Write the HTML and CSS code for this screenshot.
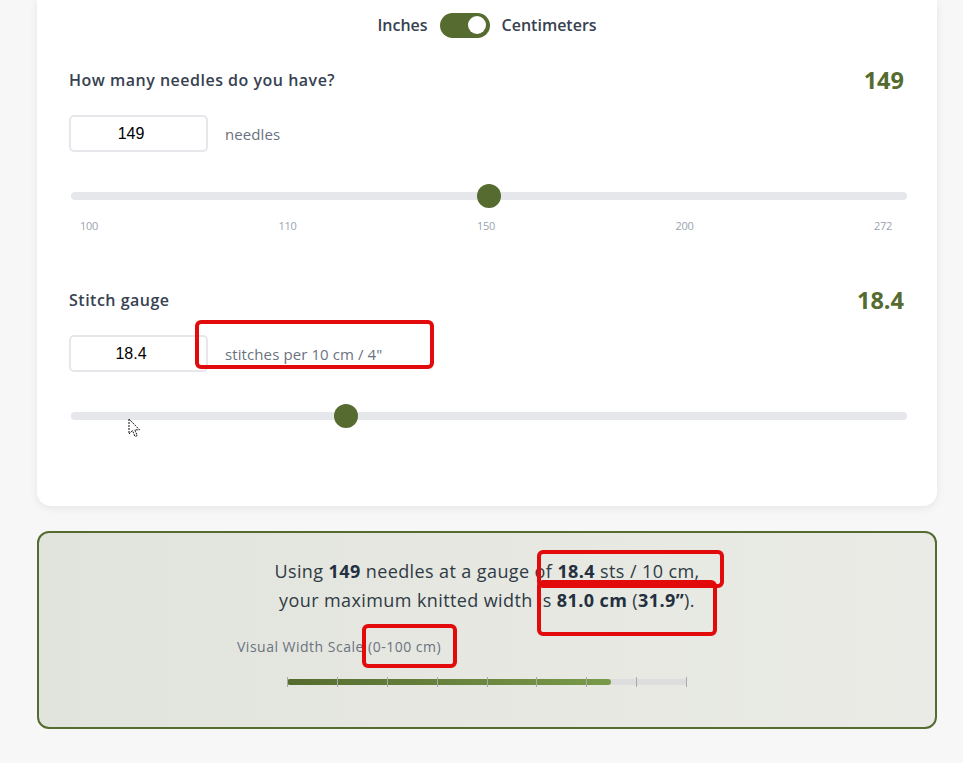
FILE: index.html
```html
<!DOCTYPE html>
<html lang="en">
<head>
<meta charset="utf-8">
<title>Knitting width calculator</title>
<link rel="stylesheet" href="styles.css">
</head>
<body>
<div class="page">
  <section class="card">
    <div class="units">
      <span class="unit">Inches</span>
      <span class="switch"><span class="knob"></span></span>
      <span class="unit">Centimeters</span>
    </div>

    <div class="field">
      <div class="field-head">
        <span class="label">How many needles do you have?</span>
        <span class="value">149</span>
      </div>
      <div class="input-row">
        <div class="num-input">149</div>
        <span class="suffix">needles</span>
      </div>
      <div class="slider">
        <div class="track"></div>
        <div class="thumb" style="left: 406px"></div>
      </div>
      <div class="ticks">
        <span>100</span><span>110</span><span>150</span><span>200</span><span>272</span>
      </div>
    </div>

    <div class="field field-gauge">
      <div class="field-head">
        <span class="label">Stitch gauge</span>
        <span class="value">18.4</span>
      </div>
      <div class="input-row">
        <div class="num-input">18.4</div>
        <span class="suffix">stitches per 10 cm / 4"</span>
      </div>
      <div class="slider">
        <div class="track"></div>
        <div class="thumb" style="left: 263px"></div>
      </div>
    </div>
  </section>

  <section class="result">
    <p class="summary">Using <b>149</b> needles at a gauge of <b>18.4</b> sts / 10 cm,<br>your maximum knitted width is <b>81.0 cm</b> (<b>31.9”</b>).</p>
    <div class="scale">
      <div class="scale-label">Visual Width Scale (0-100 cm)</div>
      <div class="bar">
        <div class="fill" style="width: 81%"></div>
        <div class="marks">
          <i></i><i></i><i></i><i></i><i></i><i></i><i></i><i></i><i></i>
        </div>
      </div>
    </div>
  </section>
</div>

<div class="mark mark-1"></div>
<div class="mark mark-2"></div>
<div class="mark mark-3"></div>
<div class="mark mark-4"></div>

<svg class="cursor" width="14" height="20" viewBox="0 0 14 20">
  <path d="M1 1 L1 16 L4.5 12.5 L7 18.5 L9.2 17.6 L6.8 11.8 L11.5 11.8 Z" fill="#fff" stroke="#111" stroke-width="1" stroke-dasharray="2 1"/>
</svg>
</body>
</html>
```

FILE: styles.css
```css
* { box-sizing: border-box; }

html, body {
  margin: 0;
  padding: 0;
  background: #f7f7f7;
  font-family: "Open Sans", "Noto Sans", sans-serif;
  color: #374151;
  overflow: hidden;
}

.page {
  width: 900px;
  margin-left: 37px;
}

.card {
  background: #fff;
  border-radius: 0 0 14px 14px;
  box-shadow: 0 2px 8px rgba(0, 0, 0, 0.08);
  padding: 12px 33px 78px 32px;
}

.units {
  display: flex;
  justify-content: center;
  align-items: center;
  gap: 12px;
  height: 26px;
  margin-left: 1px;
}

.unit {
  font-size: 16px;
  font-weight: 600;
  color: #374151;
}

.switch {
  width: 50px;
  height: 25px;
  border-radius: 13px;
  background: #556b2f;
  display: flex;
  align-items: center;
  justify-content: flex-end;
  padding-right: 4px;
}

.knob {
  width: 18px;
  height: 18px;
  border-radius: 50%;
  background: #fff;
}

.field { margin-top: 28px; }
.field-gauge { margin-top: 53px; }

.field-head {
  display: flex;
  justify-content: space-between;
  align-items: center;
  height: 28px;
}

.label {
  font-size: 16px;
  font-weight: 600;
  letter-spacing: 0.5px;
  color: #374151;
}

.value {
  font-size: 23.5px;
  font-weight: 700;
  color: #556b2f;
}

.input-row {
  display: flex;
  align-items: center;
  gap: 17px;
  margin-top: 21px;
}

.num-input {
  width: 139px;
  height: 37px;
  border: 2px solid #e5e7eb;
  border-radius: 5px;
  display: flex;
  align-items: center;
  justify-content: center;
  padding-right: 15px;
  font-family: "Liberation Sans", Arial, sans-serif;
  font-size: 16px;
  color: #000;
  background: #fff;
}

.suffix {
  font-size: 15px;
  letter-spacing: 0.1px;
  color: #6b7280;
}

.slider {
  position: relative;
  height: 24px;
  margin-top: 32px;
  margin-left: 2px;
}

.track {
  position: absolute;
  left: 0;
  right: -3px;
  top: 8px;
  height: 8px;
  border-radius: 4px;
  background: #e5e7eb;
}

.thumb {
  position: absolute;
  top: 0;
  width: 24px;
  height: 24px;
  border-radius: 50%;
  background: #556b2f;
}

.ticks {
  display: flex;
  justify-content: space-between;
  padding: 0 12px 0 11px;
  margin-top: 10px;
  font-size: 11px;
  letter-spacing: -0.3px;
  color: #9ca3af;
}

.result {
  margin-top: 25px;
  border: 2px solid #556b2f;
  border-radius: 12px;
  background: linear-gradient(90deg, #e1e4dc 0%, #e6e8e1 55%, #eaebe6 100%);
  padding: 24px 0 0;
  height: 198px;
}

.summary {
  margin: 0;
  text-align: center;
  font-size: 18px;
  letter-spacing: 0.4px;
  line-height: 29px;
  color: #2f3a45;
}

.summary b { font-weight: 700; color: #243040; }

.scale {
  width: 500px;
  margin: 22px auto 0;
}

.scale-label {
  font-size: 14px;
  letter-spacing: 0.5px;
  color: #6b7280;
}

.bar {
  position: relative;
  width: 400px;
  height: 6px;
  margin: 23px auto 0;
  background: #dddddd;
  border-radius: 3px;
}

.fill {
  height: 6px;
  border-radius: 3px;
  background: linear-gradient(90deg, #556b2f, #7a9a4a);
}

.marks {
  position: absolute;
  left: 0;
  right: 0;
  top: -2px;
  height: 10px;
  display: flex;
  justify-content: space-between;
}

.marks i {
  width: 1px;
  height: 10px;
  background: #a8a8a8;
}

.mark {
  position: absolute;
  border: 4px solid #e20a0a;
  border-radius: 6px;
}

.mark-1 { left: 195px; top: 320px; width: 239px; height: 49px; }
.mark-2 { left: 537px; top: 550px; width: 187px; height: 38px; }
.mark-3 { left: 537px; top: 580px; width: 180px; height: 56px; }
.mark-4 { left: 362px; top: 624px; width: 95px; height: 44px; }

.cursor {
  position: absolute;
  left: 128px;
  top: 418px;
}
```
